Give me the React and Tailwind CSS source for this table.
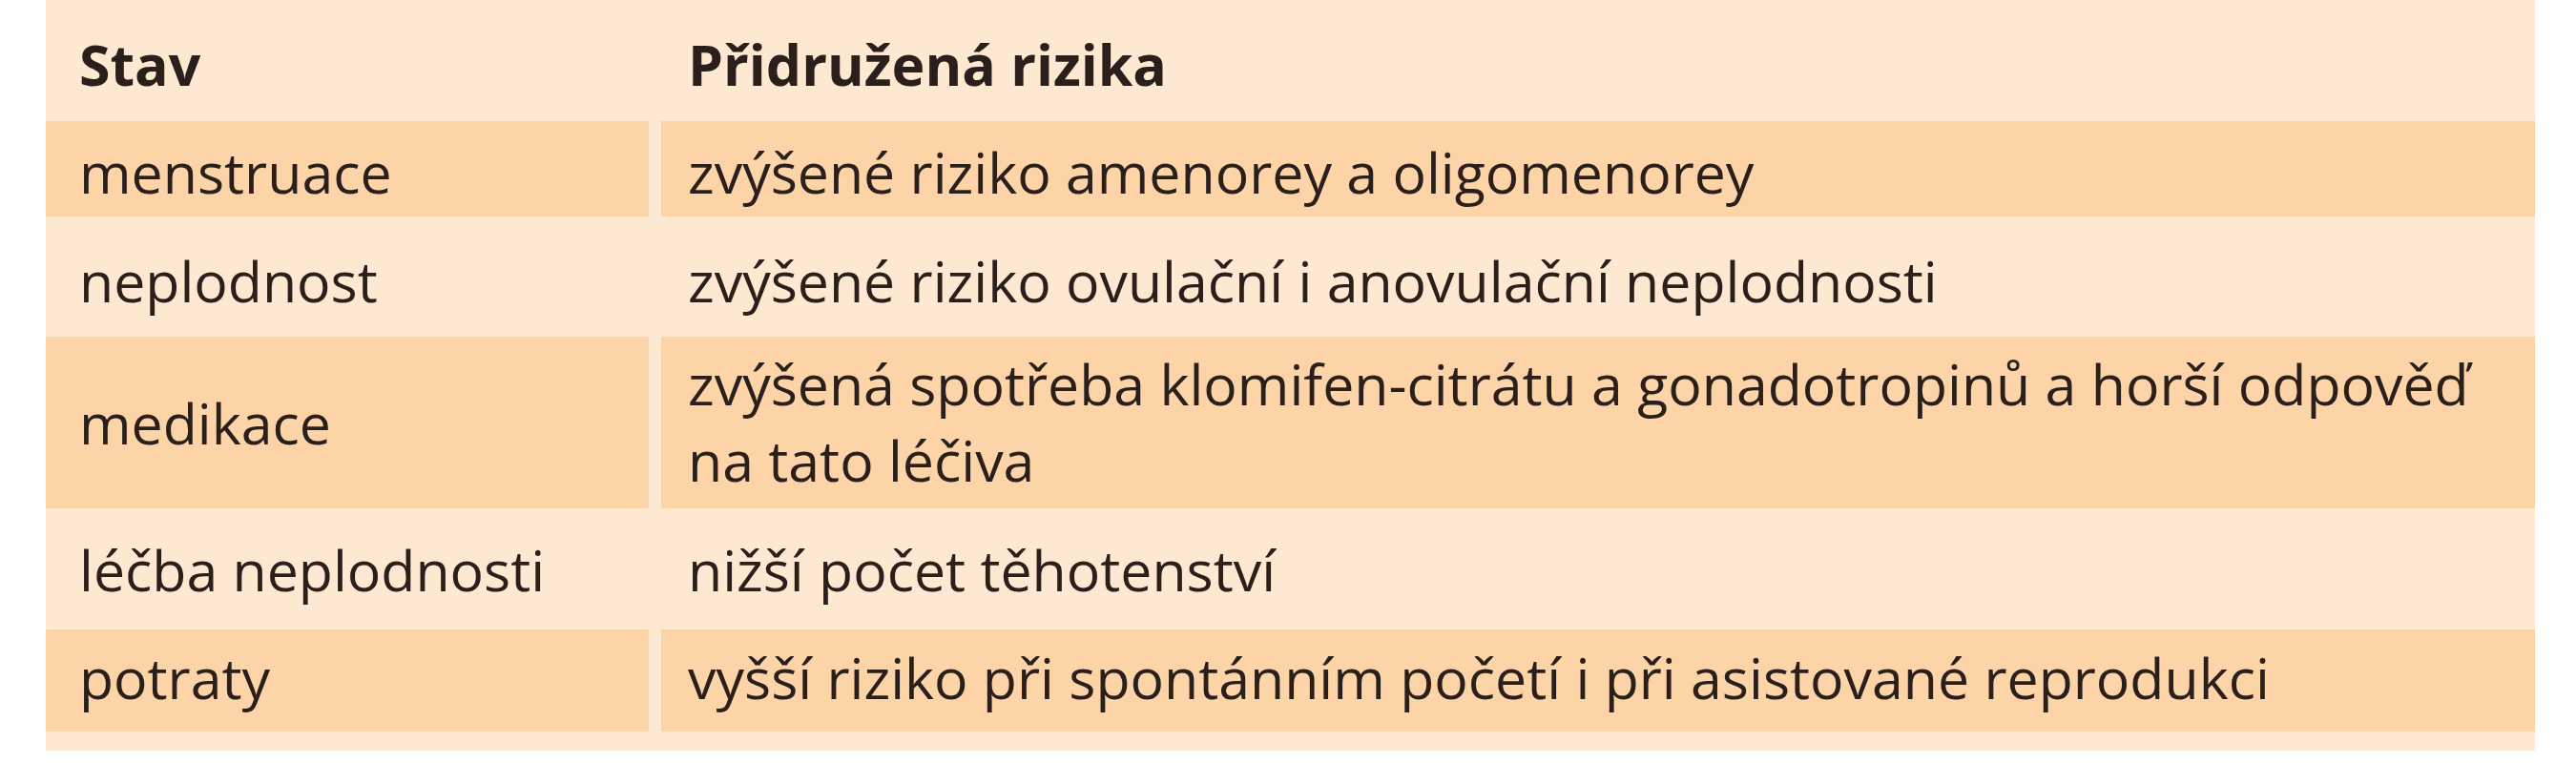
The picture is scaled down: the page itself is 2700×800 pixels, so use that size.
import React from "react";

const rows = [
  { a: "menstruace", b: ["zvýšené riziko amenorey a oligomenorey"], dark: true, h: "h-[100px]", pt: "pt-[13px]" },
  { a: "neplodnost", b: ["zvýšené riziko ovulační i anovulační neplodnosti"], dark: false, h: "h-[126px]", pt: "pt-[27px]" },
  { a: "medikace", b: ["zvýšená spotřeba klomifen-citrátu a gonadotropinů a horší odpověď", "na tato léčiva"], dark: true, h: "h-[180px]", pt: "pt-[9px]", center: true },
  { a: "léčba neplodnosti", b: ["nižší počet těhotenství"], dark: false, h: "h-[127px]", pt: "pt-[24px]" },
  { a: "potraty", b: ["vyšší riziko při spontánním početí i při asistované reprodukci"], dark: true, h: "h-[107px]", pt: "pt-[10px]" },
];

export default function App() {
  return (
    <div className="w-[2700px] h-[800px] bg-white">
      <div
        className="ml-[48px] w-[2609px] bg-[#fde8d1] pb-[20px] text-[59px] leading-[80px] text-[#2a1f1a]"
        style={{ fontFamily: '"Open Sans", "Noto Sans", sans-serif' }}
      >
        <div className="grid grid-cols-[632px_1964px] gap-x-[13px] h-[127px] font-bold">
          <div className="pl-[35px] pt-[27px] whitespace-nowrap">Stav</div>
          <div className="pl-[28px] pt-[27px] whitespace-nowrap">Přidružená rizika</div>
        </div>
        {rows.map((r, i) => (
          <div key={i} className={`grid grid-cols-[632px_1964px] gap-x-[13px] ${r.h}`}>
            <div
              className={`pl-[35px] whitespace-nowrap ${r.dark ? "bg-[#fcd4a8]" : ""} ${r.center ? "flex items-center" : r.pt}`}
            >
              {r.a}
            </div>
            <div className={`pl-[28px] whitespace-nowrap ${r.dark ? "bg-[#fcd4a8]" : ""} ${r.pt}`}>
              {r.b.map((line, j) => (
                <div key={j}>{line}</div>
              ))}
            </div>
          </div>
        ))}
      </div>
    </div>
  );
}
